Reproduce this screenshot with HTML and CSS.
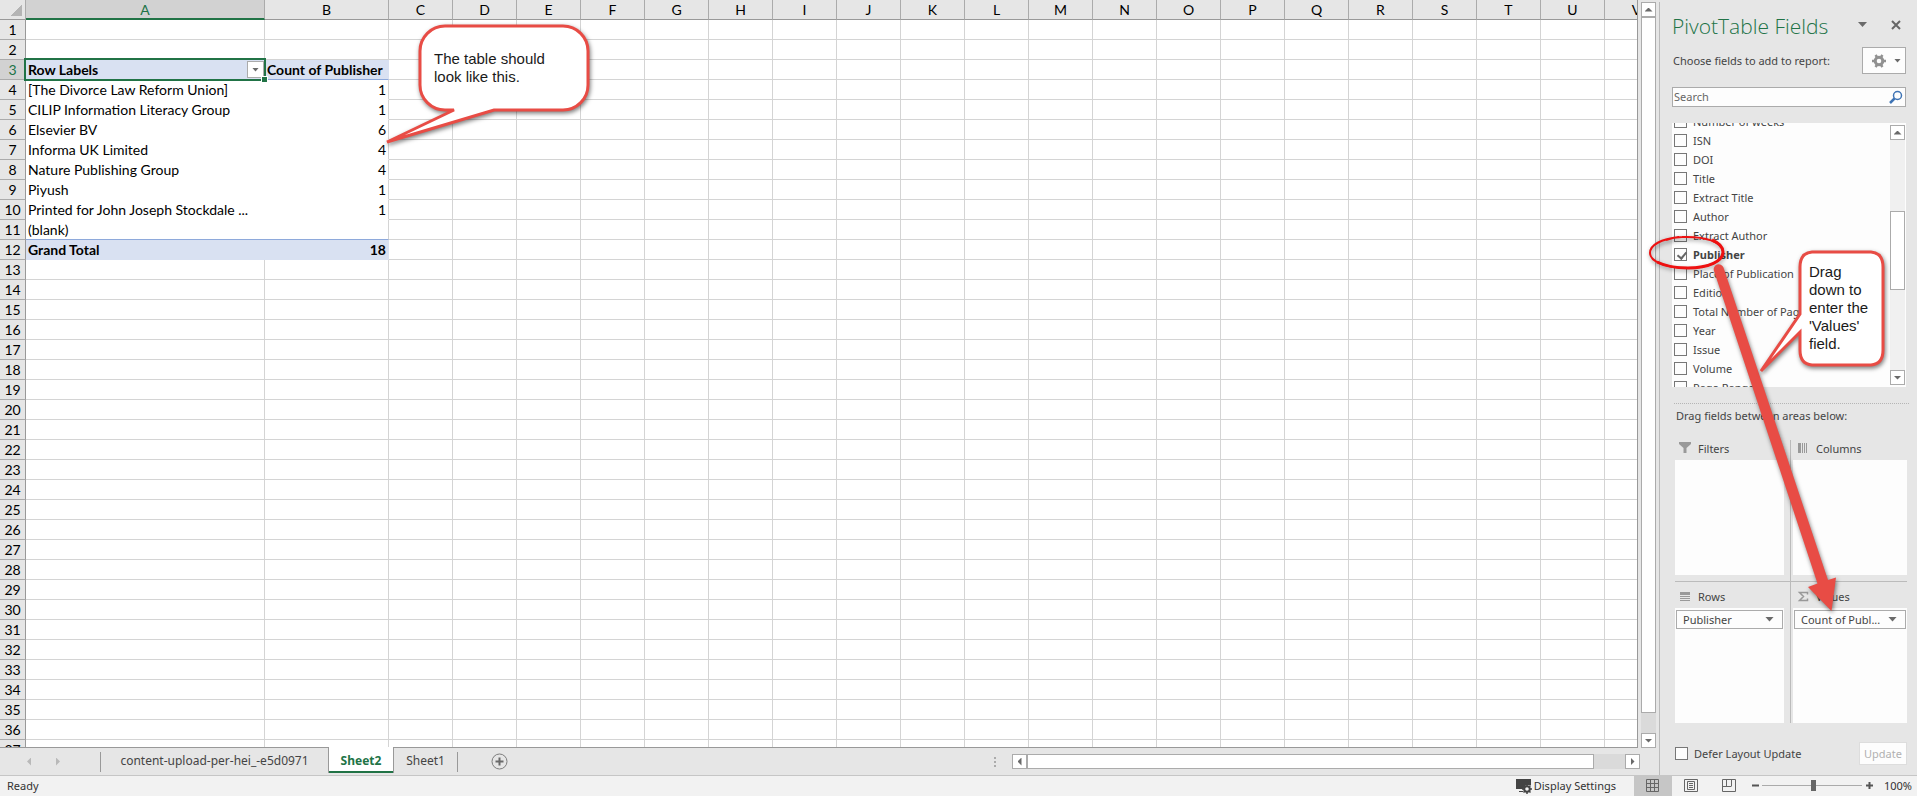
FILE: index.html
```html
<!DOCTYPE html>
<html lang="en">
<head>
  <meta charset="utf-8">
  <title>PivotTable Fields</title>
  <link rel="stylesheet" href="styles.css">
</head>
<body>
  <div class="main">
    <div class="workbook">
      <div class="sheet-row">
        <div class="sheet">
          <table class="grid">
            <thead><tr id="colHeads"></tr></thead>
            <tbody id="gridBody"></tbody>
          </table>
        </div>
        <div class="vscroll">
          <button class="sb-btn" aria-label="Scroll up"><i class="tri up"></i></button>
          <div class="sb-thumb"></div>
          <button class="sb-btn" aria-label="Scroll down"><i class="tri down"></i></button>
        </div>
      </div>

      <div class="tabbar">
        <div class="tab-nav">
          <button aria-label="Previous sheet"><i class="tri left"></i></button>
          <button aria-label="Next sheet"><i class="tri right"></i></button>
        </div>
        <span class="sep"></span>
        <button class="tab tab-wide">content-upload-per-hei_-e5d0971</button>
        <button class="tab active">Sheet2</button>
        <button class="tab">Sheet1</button>
        <span class="sep"></span>
        <button class="add-sheet" aria-label="New sheet">
          <svg width="17" height="17" viewBox="0 0 17 17"><circle cx="8.5" cy="8.5" r="7.5" fill="none" stroke="#7d7d7d"/><path d="M8.5 4.5v8M4.5 8.5h8" stroke="#6a6a6a" stroke-width="2"/></svg>
        </button>
        <span class="grip"><i></i><i></i><i></i></span>
        <div class="hscroll">
          <button class="sb-btn" aria-label="Scroll left"><i class="tri left"></i></button>
          <div class="sb-thumb"></div>
          <button class="sb-btn" aria-label="Scroll right"><i class="tri right"></i></button>
        </div>
      </div>

      <!-- table callout -->
      <div class="callout callout-table">
        <svg width="220" height="136" viewBox="380 16 220 136">
          <path d="M445 26H563a25 25 0 0 1 25 25V85a25 25 0 0 1-25 25H494L387 142L454 110H445a25 25 0 0 1-25-25V51a25 25 0 0 1 25-25Z"/>
        </svg>
        <p>The table should<br>look like this.</p>
      </div>
    </div>

    <div class="pane">
      <div class="pane-head">
        <h2>PivotTable Fields</h2>
        <button class="pane-menu" aria-label="Pane options"><i class="tri down big"></i></button>
        <button class="pane-close" aria-label="Close">
          <svg width="10" height="10" viewBox="0 0 10 10"><path d="M1 1l8 8M9 1l-8 8" stroke="#666" stroke-width="2"/></svg>
        </button>
      </div>
      <div class="choose">
        <span>Choose fields to add to report:</span>
        <button class="tools" aria-label="Tools">
          <svg width="14" height="14" viewBox="0 0 14 14"><circle cx="7" cy="7" r="3.8" fill="none" stroke="#919191" stroke-width="3"/><path d="M3.5 1l1.5 2M10.5 1L9 3M3.5 13l1.5-2M10.5 13L9 11M0 7h3M11 7h3" stroke="#919191" stroke-width="2.5"/></svg>
          <i class="tri down small"></i>
        </button>
      </div>
      <div class="search">
        <input type="text" placeholder="Search" aria-label="Search">
        <svg width="14" height="14" viewBox="0 0 14 14"><circle cx="8.5" cy="5.5" r="4" fill="none" stroke="#3f74b5" stroke-width="1.5"/><path d="M5.5 8.5L1 13" stroke="#3f74b5" stroke-width="2.5"/></svg>
      </div>
      <div class="fields">
        <div class="field-list" id="fieldList"></div>
        <div class="field-scroll">
          <button class="sb-btn" aria-label="Scroll up"><i class="tri up"></i></button>
          <div class="sb-thumb"></div>
          <button class="sb-btn" aria-label="Scroll down"><i class="tri down"></i></button>
        </div>
      </div>
      <p class="drag-hint">Drag fields between areas below:</p>
      <div class="areas">
        <div class="area">
          <h3><svg width="12" height="12" viewBox="0 0 12 12"><path d="M0 0h12v2L7.5 6v5h-3V6L0 2Z" fill="#999"/></svg>Filters</h3>
          <div class="drop"></div>
        </div>
        <div class="area">
          <h3><svg width="12" height="12" viewBox="0 0 12 12"><path d="M1 1h3v10H1ZM5 1h1v10H5ZM7 1h1v10H7ZM9 1h1v10H9Z" fill="#999"/></svg>Columns</h3>
          <div class="drop"></div>
        </div>
        <div class="area">
          <h3><svg width="12" height="12" viewBox="0 0 12 12"><path d="M1 1h10v3H1ZM1 5h10v1H1ZM1 7h10v1H1ZM1 9h10v1H1Z" fill="#999"/></svg>Rows</h3>
          <div class="drop"><button>Publisher<i class="tri down big"></i></button></div>
        </div>
        <div class="area">
          <h3><svg width="12" height="12" viewBox="0 0 12 12"><path d="M10.5 3.5V1.5h-8L6.5 5.5L2.5 9.5h8V7.5" fill="none" stroke="#999" stroke-width="1.5"/></svg>Values</h3>
          <div class="drop"><button>Count of Publ...<i class="tri down big"></i></button></div>
        </div>
      </div>
      <div class="defer">
        <label><input type="checkbox">Defer Layout Update</label>
        <button disabled>Update</button>
      </div>

      <!-- ellipse, arrow and callout -->
      <div class="callout callout-drag">
        <svg width="260" height="390" viewBox="1640 230 260 390">
          <path class="ring" d="M1679 237C1661 239 1650 245 1650 253C1650 262 1667 268 1688 268C1709 268 1723 261 1723 252C1723 242 1705 236 1682 237C1677 237 1671 238 1666 240"/>
          <path class="ring thick" d="M1657 262C1665 266 1676 268 1688 268C1709 268 1723 261 1723 252C1723 247 1719 243 1712 240"/>
          <path class="arrow" d="M1714 271A5 5 0 0 1 1723.5 267.5L1828 580L1836 577.5L1831.5 611L1808 587L1817.5 583.5Z"/>
          <path d="M1812 252H1871Q1883 253 1883 267V350Q1883 364 1871 365H1812Q1800 364 1800 350V332L1761 371L1800 314V267Q1800 253 1812 252Z"/>
        </svg>
        <p>Drag<br>down to<br>enter the<br>'Values'<br>field.</p>
      </div>
    </div>
  </div>

  <div class="status">
    <span>Ready</span>
    <button class="display">
      <svg width="16" height="16" viewBox="0 0 16 16"><path d="M0 1h15v6h-5l-3 4H0Z" fill="#444"/><path d="M3 13h4v1H3Z" fill="#444"/><circle cx="11" cy="11" r="2.8" fill="#f2f2f2" stroke="#444" stroke-width="2"/><path d="M11 6v2M11 14v2M6 11h2M14 11h2M7.5 7.5L9 9M13 13l1.5 1.5M14.5 7.5L13 9M7.5 14.5L9 13" stroke="#444" stroke-width="1.5"/></svg>
      Display Settings
    </button>
    <button class="view on" aria-label="Normal view">
      <svg width="14" height="14" viewBox="0 0 14 14"><path d="M.5 .5h12v12H.5ZM4.5 0v13M8.5 0v13M0 4.5h13M0 8.5h13" fill="none" stroke="#666"/></svg>
    </button>
    <button class="view" aria-label="Page layout">
      <svg width="14" height="14" viewBox="0 0 14 14"><path d="M.5 .5h13v12H.5ZM3.5 2.5h7v8h-7ZM5 4.5h4M5 6.5h4M5 8.5h4" fill="none" stroke="#666"/></svg>
    </button>
    <button class="view" aria-label="Page break preview">
      <svg width="14" height="14" viewBox="0 0 14 14"><path d="M.5 .5h13v12H.5ZM4.5 0v7M9.5 0v7M0 7.5h9.5" fill="none" stroke="#666"/></svg>
    </button>
    <button class="zoom-btn" aria-label="Zoom out"><svg width="7" height="7" viewBox="0 0 7 7"><path d="M0 3.5h7" stroke="#555" stroke-width="2"/></svg></button>
    <input class="zoom" type="range" min="0" max="200" value="103" aria-label="Zoom">
    <button class="zoom-btn" aria-label="Zoom in"><svg width="7" height="7" viewBox="0 0 7 7"><path d="M0 3.5h7M3.5 0v7" stroke="#555" stroke-width="2"/></svg></button>
    <span class="percent">100%</span>
  </div>

  <script>
    const letters = 'ABCDEFGHIJKLMNOPQRSTUV'.split('');
    const rowCount = 37;
    const pivot = {
      3: ['Row Labels', 'Count of Publisher'],
      4: ['[The Divorce Law Reform Union]', 1],
      5: ['CILIP Information Literacy Group', 1],
      6: ['Elsevier BV', 6],
      7: ['Informa UK Limited', 4],
      8: ['Nature Publishing Group', 4],
      9: ['Piyush', 1],
      10: ['Printed for John Joseph Stockdale ...', 1],
      11: ['(blank)', ''],
      12: ['Grand Total', 18]
    };
    const fields = ['Number of weeks', 'ISN', 'DOI', 'Title', 'Extract Title', 'Author', 'Extract Author',
      'Publisher', 'Place of Publication', 'Edition', 'Total Number of Pages', 'Year', 'Issue', 'Volume', 'Page Range'];

    document.getElementById('colHeads').innerHTML = '<th class="corner"></th>' +
      letters.map(l => `<th class="col-${l}">${l}</th>`).join('');

    let rows = '';
    for (let r = 1; r <= rowCount; r++) {
      const data = pivot[r] || ['', ''];
      const type = !pivot[r] ? '' : r === 3 ? 'pivot-head' : r === 12 ? 'pivot-total' : r === 11 ? 'pivot last' : 'pivot';
      const filter = r === 3 ? '<button class="filter" aria-label="Filter"><i class="tri down small"></i></button>' : '';
      rows += `<tr class="${type}"><th>${r}</th><td>${data[0]}${filter}</td><td>${data[1]}</td>` +
        '<td></td>'.repeat(letters.length - 2) + '</tr>';
    }
    document.getElementById('gridBody').innerHTML = rows;

    document.getElementById('fieldList').innerHTML = fields.map(f =>
      `<label><input type="checkbox"${f === 'Publisher' ? ' checked' : ''}><span>${f}</span></label>`).join('');
  </script>
</body>
</html>
```
FILE: styles.css
```css
* {
  box-sizing: border-box;
}

body {
  margin: 0;
  height: 100vh;
  display: flex;
  flex-direction: column;
  overflow: hidden;
  background: #e6e6e6;
  color: #444;
  font-family: "Noto Sans", "Open Sans", sans-serif;
  font-size: 11px;
}

button {
  padding: 0;
  border: none;
  background: none;
  color: inherit;
  font: inherit;
}

svg {
  display: block;
  flex: none;
}

.main {
  flex: 1;
  min-height: 0;
  display: flex;
}

.workbook {
  flex: 1;
  min-width: 0;
  display: flex;
  flex-direction: column;
  position: relative;
}

.sheet-row {
  flex: 1;
  min-height: 0;
  display: flex;
}

.sheet {
  flex: 1;
  min-width: 0;
  overflow: hidden;
  background: #fff;
  border-right: 1px solid #999;
  border-bottom: 1px solid #999;
}

/* triangles */
.tri {
  display: block;
  flex: none;
  width: 8px;
  height: 4px;
  background: #6a6a6a;
  clip-path: polygon(0 0, 100% 0, 50% 100%);
}

.tri.up {
  clip-path: polygon(50% 0, 100% 100%, 0 100%);
}

.tri.left,
.tri.right {
  width: 4px;
  height: 8px;
}

.tri.left {
  clip-path: polygon(100% 0, 100% 100%, 0 50%);
}

.tri.right {
  clip-path: polygon(0 0, 100% 50%, 0 100%);
}

.tri.big {
  width: 9px;
  height: 5px;
}

.tri.small {
  width: 7px;
}

/* grid */
.grid {
  table-layout: fixed;
  width: 1669px;
  border-collapse: separate;
  border-spacing: 0;
  color: #000;
  font-family: Lato, sans-serif;
  font-size: 14px;
  line-height: 19px;
}

.grid th,
.grid td {
  height: 20px;
  padding: 0 2px;
  overflow: hidden;
  white-space: nowrap;
  border-right: 1px solid #d4d4d4;
  border-bottom: 1px solid #d4d4d4;
}

.grid th {
  width: 64px;
  padding: 0;
  background: #e6e6e6;
  border-color: #ababab;
  font-weight: 400;
  text-align: center;
}

.grid thead th {
  border-bottom-color: #999;
  line-height: 17px;
}

.grid .corner {
  width: 26px;
  background: linear-gradient(135deg, transparent 50%, #b4b4b4 50%) 11px 5px / 11px 11px no-repeat #e6e6e6;
}

.grid .col-A {
  width: 239px;
  background: #d2d2d2;
  color: #217346;
  border-bottom: 2px solid #217346;
}

.grid .col-B {
  width: 124px;
}

.grid tbody th {
  border-right-color: #999;
}

.grid td:nth-child(3) {
  text-align: right;
}

.grid .pivot td:nth-child(2),
.grid .pivot td:nth-child(3) {
  border-bottom-color: #fff;
}

.grid .pivot td:nth-child(2),
.grid .pivot-head td:nth-child(2),
.grid .pivot-total td:nth-child(2) {
  border-right: none;
}

.grid .pivot-head td:nth-child(-n+3),
.grid .pivot-total td:nth-child(-n+3) {
  background: #d9e1f2;
  border-color: #d9e1f2;
  font-weight: 700;
}

.grid .pivot-head td:nth-child(3),
.grid .pivot.last td:nth-child(2),
.grid .pivot.last td:nth-child(3) {
  border-bottom-color: #8ea9db;
}

.grid .pivot-head th {
  background: #d2d2d2;
  color: #217346;
}

.grid .pivot-head td:nth-child(3) {
  text-align: left;
}

/* selected cell */
.grid .pivot-head td:nth-child(2) {
  position: relative;
  overflow: visible;
}

.pivot-head td:nth-child(2)::before {
  content: "";
  position: absolute;
  inset: -2px -1px -2px -2px;
  border: 2px solid #217346;
}

.pivot-head td:nth-child(2)::after {
  content: "";
  position: absolute;
  right: -2px;
  bottom: -3px;
  width: 5px;
  height: 5px;
  background: #217346;
  outline: 1px solid #fff;
}

.filter {
  position: absolute;
  right: 1px;
  top: 1px;
  width: 17px;
  height: 17px;
  display: flex;
  align-items: center;
  justify-content: center;
  background: #fff;
  border: 1px solid #ababab;
}

/* scroll bars */
.sb-btn {
  flex: none;
  width: 15px;
  height: 15px;
  display: flex;
  align-items: center;
  justify-content: center;
  background: #fff;
  border: 1px solid #ababab;
}

.sb-thumb {
  background: #fff;
  border: 1px solid #ababab;
}

.vscroll {
  width: 15px;
  margin: 2px 3px 0;
  display: flex;
  flex-direction: column;
  background: #dadada;
}

.vscroll .sb-thumb {
  flex: 1;
  margin-bottom: 20px;
}

.hscroll {
  width: 628px;
  display: flex;
  margin-right: 19px;
  background: #dadada;
}

.hscroll .sb-thumb {
  flex: 1;
  margin-right: 31px;
}

/* sheet tabs */
.tabbar {
  height: 27px;
  display: flex;
  align-items: center;
  font-size: 12px;
}

.tab-nav {
  width: 100px;
  padding-left: 27px;
  display: flex;
  gap: 25px;
}

.tab-nav .tri {
  background: #b9b9b9;
}

.sep {
  width: 1px;
  height: 20px;
  background: #999;
}

.tab {
  min-width: 63px;
  height: 25px;
  padding: 0 8px;
  align-self: flex-start;
}

.tab-wide {
  min-width: 227px;
}

.tab.active {
  min-width: 66px;
  height: 26px;
  margin-top: -1px;
  position: relative;
  background: #fff;
  border: solid #999;
  border-width: 0 1px;
  box-shadow: inset 0 -2px #217346;
  color: #217346;
  font-weight: 700;
}

.add-sheet {
  margin-left: 33px;
}

.grip {
  margin: 0 16px 0 auto;
  display: flex;
  flex-direction: column;
  gap: 2px;
}

.grip i {
  width: 2px;
  height: 2px;
  background: #ababab;
}

/* field pane */
.pane {
  width: 258px;
  margin-top: 2px;
  padding: 0 11px 0 12px;
  display: flex;
  flex-direction: column;
  position: relative;
  border-left: 1px solid #bbb;
}

.pane-head {
  height: 45px;
  display: flex;
  align-items: center;
}

h2 {
  margin: 2px 0 0;
  flex: 1;
  color: #217346;
  font-family: "Open Sans", sans-serif;
  font-size: 21px;
  font-weight: 300;
  white-space: nowrap;
}

.pane-menu {
  margin-right: 24px;
}

.pane-close {
  margin-right: 5px;
}

.choose {
  height: 27px;
  padding-left: 1px;
  display: flex;
  align-items: center;
  justify-content: space-between;
  white-space: nowrap;
}

.tools {
  width: 44px;
  height: 27px;
  padding: 0 4px 0 9px;
  display: flex;
  align-items: center;
  justify-content: space-between;
  background: #fdfdfd;
  border: 1px solid #ababab;
}

.search {
  height: 20px;
  margin-top: 13px;
  padding-right: 2px;
  display: flex;
  align-items: center;
  background: #fdfdfd;
  border: 1px solid #ababab;
}

.search input {
  flex: 1;
  min-width: 0;
  padding: 0 1px 2px;
  border: none;
  background: none;
  outline: none;
  font: inherit;
}

.search input::placeholder {
  color: #666;
}

.fields {
  height: 264px;
  margin-top: 16px;
  padding-right: 1px;
  display: flex;
  overflow: hidden;
  background: #fdfdfd;
}

/* list is scrolled part of a row down */
.field-list {
  flex: 1;
  margin-top: -11px;
  padding-left: 2px;
}

.field-list label {
  height: 19px;
  display: flex;
  align-items: center;
  gap: 6px;
  white-space: nowrap;
}

input[type="checkbox"] {
  appearance: none;
  flex: none;
  width: 13px;
  height: 13px;
  margin: 0;
  background: #fdfdfd;
  border: 1px solid #777;
}

input:checked {
  position: relative;
}

input:checked::after {
  content: "";
  position: absolute;
  left: 4px;
  top: 1px;
  width: 4px;
  height: 7px;
  border: solid #666;
  border-width: 0 2px 2px 0;
  transform: rotate(40deg);
}

input:checked + span {
  font-weight: 700;
}

.field-scroll {
  width: 15px;
  margin: 2px 0;
  display: flex;
  flex-direction: column;
  justify-content: space-between;
  background: #f0f0f0;
}

.field-scroll .sb-thumb {
  height: 79px;
  margin-top: -9px;
}

.drag-hint {
  margin: 16px -3px 0 2px;
  padding: 3px 2px 1px;
  border-top: 1px dotted #b5b5b5;
  line-height: 18px;
  white-space: nowrap;
}

.areas {
  flex: 1;
  min-height: 0;
  margin: 14px -1px 0 3px;
  display: grid;
  grid-template-columns: 116px 1fr;
  grid-template-rows: 1fr 1fr;
}

.area {
  min-height: 0;
  display: flex;
  flex-direction: column;
}

.area:nth-child(odd) {
  padding-right: 6px;
  border-right: 1px solid #bbb;
}

.area:nth-child(even) {
  padding-left: 2px;
}

.area:nth-child(-n+2) {
  padding-bottom: 6px;
  border-bottom: 1px solid #bbb;
}

h3 {
  height: 20px;
  margin: 0;
  padding: 0 0 4px 4px;
  display: flex;
  flex: none;
  align-items: center;
  gap: 7px;
  font-size: 11px;
  font-weight: 400;
}

.area:nth-child(n+3) h3 {
  height: 26px;
  padding: 4px 0 0 4px;
}

.drop {
  flex: 1;
  padding: 2px 1px;
  background: #fdfdfd;
}

.drop button {
  width: 100%;
  height: 19px;
  padding: 0 8px 0 6px;
  display: flex;
  align-items: center;
  justify-content: space-between;
  border: 1px solid #ababab;
  white-space: nowrap;
}

.defer {
  height: 52px;
  margin: 0 -1px 0 3px;
  padding-bottom: 10px;
  display: flex;
  align-items: flex-end;
  justify-content: space-between;
}

.defer label {
  height: 23px;
  display: flex;
  align-items: center;
  gap: 6px;
}

.defer button {
  width: 48px;
  height: 23px;
  background: #fdfdfd;
  border: 1px solid #ddd;
  color: #b1b1b1;
}

/* callouts */
.callout {
  position: absolute;
  pointer-events: none;
  color: #1a1a1a;
  font-family: "Liberation Sans", Arial, sans-serif;
  font-size: 15px;
  line-height: 18px;
}

.callout path {
  fill: #fff;
  stroke: #e84c45;
  stroke-width: 3px;
  filter: drop-shadow(1px 2px 2px rgba(0, 0, 0, 0.5));
}

.callout .ring {
  fill: none;
  stroke: #ee1111;
  stroke-width: 2px;
}

.callout .thick {
  stroke-width: 3px;
  filter: none;
}

.callout .arrow {
  fill: #e84c45;
  stroke: none;
}

.callout p {
  position: absolute;
  margin: 0;
  white-space: nowrap;
}

.callout-table {
  left: 380px;
  top: 16px;
}

.callout-table p {
  left: 54px;
  top: 34px;
}

.callout-drag {
  right: 17px;
  top: 228px;
}

.callout-drag p {
  left: 169px;
  top: 33px;
}

/* status bar */
.status {
  height: 21px;
  padding: 0 5px 1px 7px;
  display: flex;
  align-items: center;
  background: #f2f2f2;
  border-top: 1px solid #c6c6c6;
  color: #333;
}

.display {
  margin: 0 18px 0 auto;
  display: flex;
  align-items: center;
  gap: 2px;
}

.view {
  width: 38px;
  height: 20px;
  display: flex;
  align-items: center;
  justify-content: center;
}

.view.on {
  background: #c6c6c6;
}

.zoom-btn {
  margin-left: 4px;
}

.zoom {
  appearance: none;
  width: 100px;
  height: 12px;
  margin: 0 0 0 3px;
  background: linear-gradient(#ababab, #ababab) center / 100% 1px no-repeat;
}

.zoom::-webkit-slider-thumb {
  appearance: none;
  width: 5px;
  height: 11px;
  background: #666;
}

.percent {
  width: 39px;
  text-align: right;
}
```
